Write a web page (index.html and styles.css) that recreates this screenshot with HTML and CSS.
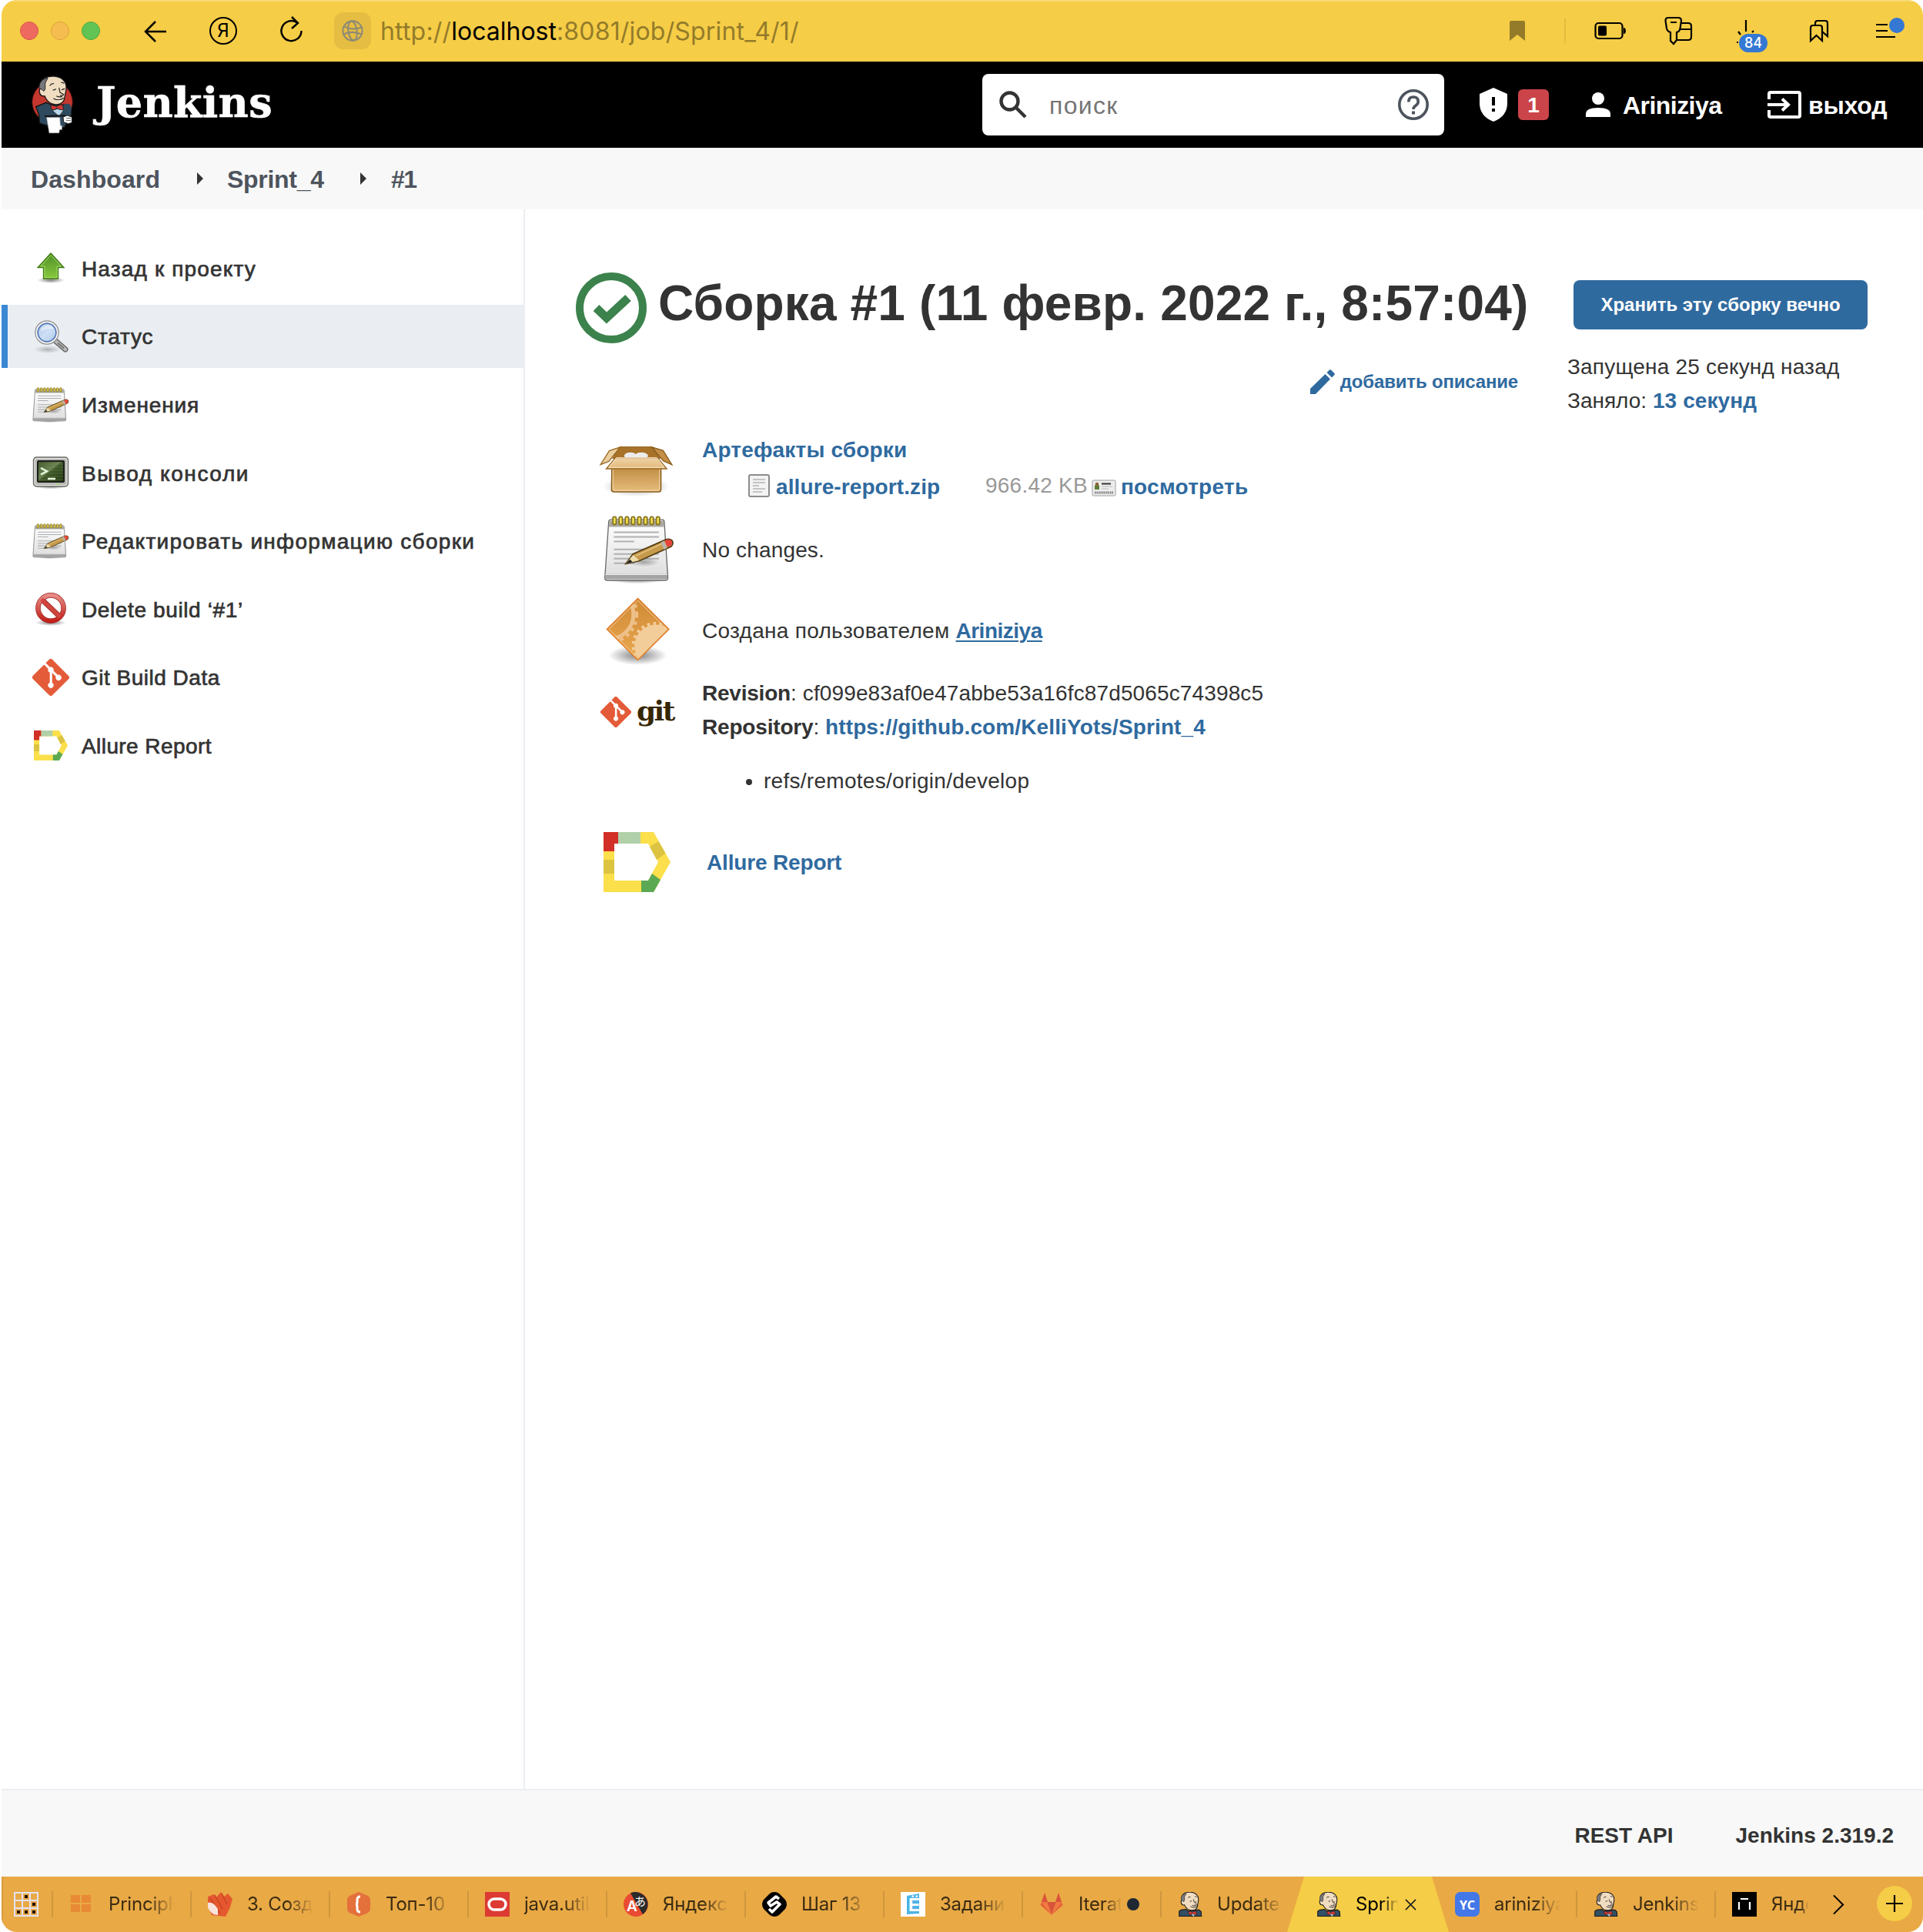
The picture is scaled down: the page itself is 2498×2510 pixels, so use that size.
FILE: index.html
```html
<!DOCTYPE html>
<html lang="ru">
<head>
<meta charset="utf-8">
<title>Sprint_4 #1 [Jenkins]</title>
<link rel="stylesheet" href="styles.css">
</head>
<body>
<svg class="defs" width="0" height="0" aria-hidden="true">
  <defs>
    <linearGradient id="gGreen" x1="0" y1="0" x2="0" y2="1"><stop offset="0" stop-color="#4f8f28"/><stop offset="1" stop-color="#87c93d"/></linearGradient>
    <linearGradient id="gLens" x1="0" y1="0" x2="1" y2="1"><stop offset="0" stop-color="#9dbbe3"/><stop offset=".5" stop-color="#cfe0f5"/><stop offset="1" stop-color="#a9c3e8"/></linearGradient>
    <linearGradient id="gPaper" x1="0" y1="0" x2="0" y2="1"><stop offset="0" stop-color="#fff"/><stop offset="1" stop-color="#dcdcdc"/></linearGradient>
    <linearGradient id="gBox" x1="0" y1="0" x2="0" y2="1"><stop offset="0" stop-color="#c08d43"/><stop offset="1" stop-color="#e6bd7c"/></linearGradient>
    <linearGradient id="gFlap" x1="0" y1="0" x2="0" y2="1"><stop offset="0" stop-color="#eed3a8"/><stop offset="1" stop-color="#e2b878"/></linearGradient>
    <linearGradient id="gScreen" x1="0" y1="0" x2="1" y2="1"><stop offset="0" stop-color="#3c5226"/><stop offset=".45" stop-color="#6c8454"/><stop offset=".5" stop-color="#3f5929"/><stop offset="1" stop-color="#243814"/></linearGradient>
    <linearGradient id="gNo" x1="0" y1="0" x2="0" y2="1"><stop offset="0" stop-color="#e88b85"/><stop offset="1" stop-color="#c2201a"/></linearGradient>
    <linearGradient id="gDia" x1="0" y1="0" x2="0" y2="1"><stop offset="0" stop-color="#cf8a35"/><stop offset="1" stop-color="#eba850"/></linearGradient>
    <radialGradient id="gShade"><stop offset="0" stop-color="#000" stop-opacity=".5"/><stop offset="1" stop-color="#000" stop-opacity="0"/></radialGradient>
    <clipPath id="diaClip"><path d="M175 624L292 740 175 856 59 740z"/></clipPath>

    <symbol id="butler-head" viewBox="44 38 148 148">
      <path d="M52 184l0-30 12-8 30-4 14 10 50-6 14 0 12 10 2 28z" fill="#334f63" stroke="#1a1a1a" stroke-width="5"/>
      <path d="M68 66c4-18 26-28 52-27 30 2 48 20 48 42 0 16-4 26-6 40-2 20-18 28-36 27-20-2-34-14-42-32-12 2-18-4-20-14-2-8 2-16 6-17z" fill="#f0dcc0" stroke="#1a1a1a" stroke-width="5"/>
      <path d="M66 88c-4-16 0-32 22-40l8-2-12 20 0 22-6 10c-4-6-8-10-12-10z" fill="#7c7c80" stroke="#222" stroke-width="3"/>
      <path d="M104 74q6-10 16-6M146 66q8-4 12 4M116 94q8 2 12-4M146 100l10-4M138 82l4 16 16 14q-4 8-14 4M120 126q22 12 38 0l2-8M130 118q10 6 20 2" fill="none" stroke="#222" stroke-width="4"/>
      <path d="M118 168l20 18 20-18-20-6z" fill="#b8d4e6" stroke="#222" stroke-width="3"/>
      <path d="M106 154q16 0 24 6 10-8 24-6l4 20q-14 2-26-6-10 8-20 6z" fill="#d33833" stroke="#222" stroke-width="3"/>
    </symbol>

    <symbol id="butler" viewBox="30 34 168 232">
      <ellipse cx="114" cy="140" rx="79" ry="80" fill="#c5372e" stroke="#3a0d0b" stroke-width="3"/>
      <path d="M50 158L90 142 114 152 168 150 190 186 160 240 96 232 64 222 62 190z" fill="#2f4a5e" stroke="#151515" stroke-width="4"/>
      <path d="M158 150Q182 140 188 158 190 178 182 194L156 198z" fill="#2f4a5e"/>
      <path d="M68 66c4-18 26-28 52-27 30 2 48 20 48 42 0 16-4 26-6 40-2 20-18 30-36 29-20-2-34-14-42-34-12 2-18-4-20-14-2-8 2-16 6-17z" fill="#f0dcc0" stroke="#1a1a1a" stroke-width="4"/>
      <path d="M64 88c-4-16 4-34 24-40l8-2-10 20 0 24-6 8c-4-6-10-10-16-10z" fill="#77777b" stroke="#222" stroke-width="3"/>
      <path d="M104 76q6-10 16-8M148 64q8-2 12 4M116 92q8 2 12-4M150 92l12-4M140 84l4 18 14 8q-4 8-14 4M118 126q22 12 40-2M130 116q10 6 22 2" fill="none" stroke="#222" stroke-width="3.500"/>
      <path d="M118 128q16 8 32 4l-8 6z" fill="#fff"/>
      <path d="M114 172L140 196 160 168 140 164z" fill="#b8d4e6" stroke="#222" stroke-width="2"/>
      <path d="M106 152q16 0 24 6 10-10 24-8l4 20q-14 2-26-6-10 8-20 6z" fill="#d33833" stroke="#222" stroke-width="3"/>
      <path d="M84 195L166 193" stroke="#151515" stroke-width="6"/>
      <path d="M92 200H143L145 232H151V247H142L140 260H102z" fill="#fff" stroke="#bbb" stroke-width="2"/>
      <path d="M156 198L172 192 190 198V220L176 224 158 218z" fill="#fff" stroke="#222" stroke-width="3"/>
      <path d="M168 203h18M168 212h18" stroke="#444" stroke-width="2.500"/>
    </symbol>

    <symbol id="notepad" viewBox="44 296 274 268">
      <ellipse cx="172" cy="546" rx="110" ry="16" fill="url(#gShade)"/>
      <path d="M72 314H272Q278 314 279 322L293 538Q293 549 284 549H58Q49 549 49 540L64 322Q65 314 72 314z" fill="url(#gPaper)" stroke="#6a6a6a" stroke-width="4"/>
      <path d="M66 318h210l2 24H64z" fill="#aaa79f"/>
      <path d="M52 524h238l2 20H50z" fill="#a3a5a4"/><path d="M52 526h238" stroke="#e8e8e8" stroke-width="4"/>
      <g stroke="#b0b0b0" stroke-width="6"><path d="M84 363h174M84 381h174M84 399h78M84 429h174M84 447h174M84 465h174M84 483h80"/></g>
      <g fill="#efe053" stroke="#86701a" stroke-width="5"><rect x="80" y="303" width="13" height="30" rx="6"/><rect x="104" y="303" width="13" height="30" rx="6"/><rect x="128" y="303" width="13" height="30" rx="6"/><rect x="152" y="303" width="13" height="30" rx="6"/><rect x="176" y="303" width="13" height="30" rx="6"/><rect x="200" y="303" width="13" height="30" rx="6"/><rect x="224" y="303" width="13" height="30" rx="6"/><rect x="248" y="303" width="13" height="30" rx="6"/></g>
      <ellipse cx="200" cy="478" rx="60" ry="18" fill="url(#gShade)" opacity=".6"/>
      <path d="M130 485L158 447 286 391Q302 386 310 396 316 408 306 418L182 474z" fill="#c69a4c" stroke="#513b12" stroke-width="5"/>
      <path d="M130 485L158 451 168 458 181 472z" fill="#eddcae"/><path d="M130 486l16-18 10 10z" fill="#222"/>
      <path d="M170 454L272 406" stroke="#e4c07a" stroke-width="5"/>
      <path d="M266 402l12-6 12 28-12 6z" fill="#b9b4ae"/>
      <path d="M280 395l10-3q14-3 18 6 4 12-6 18l-10 5z" fill="#e8423c"/>
    </symbol>

    <symbol id="arrow-up" viewBox="0 0 48 48">
      <ellipse cx="24" cy="40" rx="18" ry="4" fill="url(#gShade)"/>
      <path d="M24 5L41 23.500H33.500V38H14.500V23.500H7z" fill="url(#gGreen)" stroke="#3f7a13" stroke-width="1.300"/>
      <path d="M24 7.500L37.500 22H32V36.500H16V22H10.500z" fill="none" stroke="#a5dc6b" stroke-width="1"/>
    </symbol>
    <symbol id="magnifier" viewBox="0 0 48 48">
      <ellipse cx="20" cy="41" rx="18" ry="5" fill="url(#gShade)" opacity=".5"/>
      <path d="M29 29l14 12" stroke="#5f5f5f" stroke-width="7" stroke-linecap="round"/>
      <path d="M29 29l14 12" stroke="#b9b9b9" stroke-width="4.500" stroke-linecap="round"/>
      <path d="M33 32.500l8 7" stroke="#777" stroke-width="2"/>
      <circle cx="19" cy="19" r="14" fill="url(#gLens)" stroke="#8c8c8c" stroke-width="3.500"/>
      <circle cx="19" cy="19" r="13.600" fill="none" stroke="#f4f4f4" stroke-width="2"/>
      <circle cx="19" cy="19" r="11.700" fill="none" stroke="#4a74b8" stroke-width="1.400"/>
      <path d="M10 18q1-8 9-9 7 0 8 5-8 0-17 4z" fill="#fff" opacity=".45"/>
    </symbol>
    <symbol id="terminal" viewBox="0 0 48 48">
      <ellipse cx="24" cy="42" rx="20" ry="3.500" fill="url(#gShade)"/>
      <rect x="1.500" y="4" width="45" height="38" rx="4" fill="#b9bab6" stroke="#6d6e6a" stroke-width="1.400"/>
      <rect x="3" y="5.500" width="42" height="35" rx="3" fill="none" stroke="#e9e9e7" stroke-width="1"/>
      <rect x="7" y="9" width="34" height="27" rx="1" fill="url(#gScreen)" stroke="#1d1e1a" stroke-width="2"/>
      <path d="M8 13h32M8 17h32M8 21h32M8 25h32M8 29h32M8 33h32" stroke="#7f9a60" stroke-width=".7" opacity=".5"/>
      <path d="M11 18l8 4.200-8 4.300M20 32h10" fill="none" stroke="#e6f9df" stroke-width="2.400"/>
      <circle cx="33" cy="38.800" r="1.100" fill="#8ce03c"/>
    </symbol>
    <symbol id="no-entry" viewBox="0 0 48 48">
      <ellipse cx="24" cy="42" rx="20" ry="4" fill="url(#gShade)"/>
      <circle cx="24" cy="23" r="16.600" fill="#fff" stroke="#9a2a26" stroke-width="6.600"/>
      <path d="M12 11.500L36 34.500" stroke="#9a2a26" stroke-width="6.600"/>
      <circle cx="24" cy="23" r="16.600" fill="none" stroke="url(#gNo)" stroke-width="5.200"/>
      <path d="M12 11.500L36 34.500" stroke="#d2453f" stroke-width="5"/>
    </symbol>
    <symbol id="git-mark" viewBox="0 0 92 92">
      <path fill="#e35b38" d="M90.156 41.965 50.036 1.848a5.918 5.918 0 0 0-8.372 0l-8.328 8.332 10.566 10.566a7.030 7.030 0 0 1 7.230 1.684 7.034 7.034 0 0 1 1.669 7.277l10.187 10.184a7.028 7.028 0 0 1 7.278 1.672 7.040 7.040 0 0 1 0 9.957 7.050 7.050 0 0 1-9.965 0 7.044 7.044 0 0 1-1.528-7.660l-9.500-9.497V59.360a7.040 7.040 0 0 1 1.860 11.290 7.040 7.040 0 0 1-9.957 0 7.040 7.040 0 0 1 0-9.958 7.060 7.060 0 0 1 2.304-1.539V33.926a7.049 7.049 0 0 1-3.820-9.234L29.242 14.272 1.730 41.777a5.918 5.918 0 0 0 0 8.371L41.852 90.270a5.925 5.925 0 0 0 8.370 0l39.934-39.934a5.925 5.925 0 0 0 0-8.371"/>
    </symbol>
    <symbol id="allure" viewBox="0 0 87 78" preserveAspectRatio="none">
      <path d="M0 0H65L87 39 65 78H0zM14 15V63H58L71 39 58 15z" fill="#fbdf4b" fill-rule="evenodd"/>
      <path d="M0 0H19V15H14V25H0z" fill="#d22f27"/>
      <path d="M19 0H48V15H19z" fill="#b0d0a9"/>
      <path d="M0 36H14V54H0z" fill="#dcc341"/>
      <path d="M60 19L71.500 12 80.500 27.500 69 36z" fill="#dcc341"/>
      <path d="M49 63H58L63 54 74 62 65 78H49z" fill="#5ca953"/>
    </symbol>
    <symbol id="box" viewBox="26 24 290 204">
      <ellipse cx="170" cy="186" rx="130" ry="40" fill="url(#gShade)" opacity=".7"/>
      <path d="M76 112H267V196Q267 207 258 207H84Q75 207 75 198z" fill="url(#gBox)" stroke="#8b5e1e" stroke-width="5"/>
      <path d="M80 116V196Q80 202 88 202H254Q262 202 262 196V116" fill="none" stroke="#f3dcb2" stroke-width="3"/>
      <path d="M108 32H232L262 76H80z" fill="#a87228" stroke="#9a6a26" stroke-width="4"/>
      <ellipse cx="148" cy="66" rx="24" ry="13" fill="#ececec"/><ellipse cx="191" cy="66" rx="26" ry="13" fill="#ececec"/>
      <path d="M108 33L66 47 32 101 64 88z" fill="#eccf9e" stroke="#9a6a26" stroke-width="4"/>
      <path d="M232 33L276 46 310 101 276 86z" fill="#c48f45" stroke="#8b5e1e" stroke-width="4"/>
      <path d="M90 74H254L290 117H54z" fill="url(#gFlap)" stroke="#9a6a26" stroke-width="4"/>
      <path d="M94 74H251L280 112H64z" fill="none" stroke="#f8e7c8" stroke-width="3"/>
    </symbol>
    <symbol id="gears" viewBox="44 612 262 268">
      <ellipse cx="175" cy="842" rx="115" ry="38" fill="url(#gShade)"/>
      <path d="M175 619L297 740 175 861 54 740z" fill="url(#gDia)" stroke="#e07b2a" stroke-width="4"/>
      <g clip-path="url(#diaClip)" fill="none" stroke="#f2cd9a">
        <circle cx="62" cy="682" r="96" stroke-width="15" stroke="#eec089"/>
        <circle cx="62" cy="682" r="109" stroke-width="12" stroke-dasharray="13 15" stroke="#eec089"/>
        <circle cx="246" cy="806" r="84" fill="#f2cd9a" stroke="none"/>
        <circle cx="246" cy="806" r="89" stroke-width="12" stroke-dasharray="11 13"/>
      </g>
      <path d="M175 627L289 740 175 853 62 740z" fill="none" stroke="#f5cf9c" stroke-width="3"/>
    </symbol>
  </defs>
</svg>

<div class="window">
  <header class="toolbar">
    <div class="lights"><i class="light red"></i><i class="light amber"></i><i class="light green"></i></div>
    <svg class="nav back" viewBox="0 0 28 28"><path d="M28 14H1M14 1L1 14l13 13"/></svg>
    <div class="ya">Я</div>
    <svg class="nav reload" viewBox="0 0 30 36"><path d="M22 8.500A13 13 0 1 0 27.500 19"/><path d="M15 1l8 8-8 7"/></svg>
    <div class="site">
      <svg viewBox="0 0 30 30"><circle cx="15" cy="15" r="13.500"/><ellipse cx="15" cy="15" rx="6" ry="13.500" transform="rotate(-8 15 15)"/><path d="M3 9q12 6 25 1M2 20q12-6 26 0"/></svg>
    </div>
    <div class="url">http://<b>localhost</b>:8081/job/Sprint_4/1/</div>
    <svg class="mark" viewBox="0 0 20 26"><path d="M2 0H18Q20 0 20 2V26L10 18 0 26V2Q0 0 2 0z"/></svg>
    <i class="rule"></i>
    <svg class="tool battery" viewBox="0 0 42 24"><rect x="1.500" y="2" width="35" height="20" rx="4"/><rect x="5" y="5.500" width="11" height="13" rx="2" class="solid"/><path class="solid" d="M38 8h1q2 1 2 4t-2 4h-1z"/></svg>
    <svg class="tool key" viewBox="0 0 38 38"><path d="M5 2H18Q22 2 22 6L20.500 16Q20 20 16 21V31L12 36 8 32V21Q4 20 3 16L1.500 6Q1.500 2 5 2zM8 8h8"/><path d="M22 9H31Q35 9 35 13V27Q35 31 31 31H17M20 17H35"/></svg>
    <div class="power">
      <svg class="tool" viewBox="0 0 32 32"><path d="M13 1V16M3 16l3 4M21 17l2-2M1 30h2"/></svg>
      <span class="count">84</span>
    </div>
    <svg class="tool marks" viewBox="0 0 26 30"><path d="M2 28V11Q2 8 5 8H14Q17 8 17 11V28L9.500 21z"/><path d="M8 8V5Q8 2 11 2H21Q24 2 24 5V22L17 16"/></svg>
    <div class="menu"><i></i><i></i><i></i><span class="dot"></span></div>
  </header>

  <header class="jenkins">
    <svg class="butler"><use href="#butler"/></svg>
    <div class="brand">Jenkins</div>
    <div class="search">
      <svg class="glass" viewBox="0 0 36 36"><circle cx="13.500" cy="13.500" r="11"/><path d="M22 22L34 34"/></svg>
      <span>поиск</span>
      <svg class="help" viewBox="0 0 40 40"><circle cx="20" cy="20" r="18.200"/><path d="M13.800 16.500Q13.800 10 20 10T26.200 16Q26.200 19 23 21.200 20 23.200 20 26"/><path class="solid" d="M18 28.500h4v4h-4z"/></svg>
    </div>
    <svg class="shield" viewBox="0 0 36 44"><path fill="#fff" d="M18 0L36 8V20Q36 37 18 44 0 37 0 20V8z"/><path d="M16 12h4v11h-4zM16 27h4v4h-4z"/></svg>
    <span class="alert">1</span>
    <svg class="person" viewBox="0 0 32 32"><circle cx="16" cy="8" r="8"/><path d="M0 32V28Q0 20 16 20T32 28V32z"/></svg>
    <b class="user">Ariniziya</b>
    <svg class="exit" viewBox="0 0 44 36"><path d="M2 11V4Q2 2 4 2H40Q42 2 42 4V32Q42 34 40 34H4Q2 34 2 32V25M0 18H26M19 10.500L27 18 19 25.500"/></svg>
    <b class="logout">выход</b>
  </header>

  <nav class="crumbs">
    <span class="c1">Dashboard</span><i></i><span class="c2">Sprint_4</span><i></i><span class="c3">#1</span>
  </nav>

  <div class="page">
    <aside class="side">
      <a class="s1"><svg><use href="#arrow-up"/></svg><span>Назад к проекту</span></a>
      <a class="s2 active"><svg><use href="#magnifier"/></svg><span>Статус</span></a>
      <a class="s3"><svg><use href="#notepad"/></svg><span>Изменения</span></a>
      <a class="s4"><svg><use href="#terminal"/></svg><span>Вывод консоли</span></a>
      <a class="s5"><svg><use href="#notepad"/></svg><span>Редактировать информацию сборки</span></a>
      <a class="s6"><svg><use href="#no-entry"/></svg><span>Delete build ‘#1’</span></a>
      <a class="s7"><svg><use href="#git-mark"/></svg><span>Git Build Data</span></a>
      <a class="s8"><svg class="allure-small"><use href="#allure"/></svg><span>Allure Report</span></a>
    </aside>

    <main class="main">
      <section class="build">
        <div class="title">
          <svg viewBox="0 0 92 92"><circle cx="46" cy="46" r="41" fill="none" stroke="#3c824c" stroke-width="10"/><path d="M26.500 46L40 59 68 33" fill="none" stroke="#3c824c" stroke-width="11"/></svg>
          <h1>Сборка #1 (11 февр. 2022 г., 8:57:04)</h1>
        </div>
        <a class="describe">
          <svg viewBox="0 0 32 32"><path d="M0 32V25L19.500 6 26 12.500 7 32zM21.500 4L25 .500Q26 0 27 .500L31.500 5Q32 6 31.500 7L28 10.500z"/></svg>добавить описание
        </a>
        <div class="row r1">
          <svg class="i-box"><use href="#box"/></svg>
          <div>
            <a class="art">Артефакты сборки</a>
            <div class="file">
              <svg class="doc" viewBox="0 0 28 30"><rect x="1" y="1" width="26" height="28" rx="2" fill="#f3f3f3" stroke="#8c8c8c" stroke-width="2"/><path d="M6 7h16M6 11h16M6 15h8M6 19h16M6 23h12" stroke="#c4c4c4" stroke-width="2"/></svg>
              <a class="zip">allure-report.zip</a>
              <span class="size">966.42 KB</span>
              <svg class="card" viewBox="0 0 32 22"><rect x="1" y="1" width="30" height="20" rx="2" fill="#ededed" stroke="#bcbcbc" stroke-width="1.500"/><path d="M4 13V8q3-5 6 0v5z" fill="#5f7d35"/><circle cx="7" cy="6" r="2.300" fill="#8e6438"/><path d="M13 5.500h12" stroke="#333" stroke-width="2"/><path d="M13 9h14M13 12h9" stroke="#ccc" stroke-width="1.500"/><path d="M4 17h24" stroke="#777" stroke-width="3" stroke-dasharray="1.500 1"/></svg>
              <a class="view">посмотреть</a>
            </div>
          </div>
        </div>
        <div class="row r2"><svg class="i-note"><use href="#notepad"/></svg><span class="t2">No changes.</span></div>
        <div class="row r3"><svg class="i-gears"><use href="#gears"/></svg><span class="t3">Создана пользователем</span><a class="u3">Ariniziya</a></div>
        <div class="row r4">
          <div class="gitlogo"><svg><use href="#git-mark"/></svg><span>git</span></div>
          <div>
            <p class="rev"><b>Revision</b>: cf099e83af0e47abbe53a16fc87d5065c74398c5</p>
            <p class="repo"><b>Repository</b>: <a>https://github.com/KelliYots/Sprint_4</a></p>
            <ul><li>refs/remotes/origin/develop</li></ul>
          </div>
        </div>
        <div class="row r5"><svg class="i-allure"><use href="#allure"/></svg><a class="t5">Allure Report</a></div>
      </section>

      <section class="meta">
        <button>Хранить эту сборку вечно</button>
        <p class="m1">Запущена 25 секунд назад</p>
        <p class="m2">Заняло: <a>13 секунд</a></p>
      </section>
    </main>
  </div>

  <footer class="foot"><span>REST API</span><span>Jenkins 2.319.2</span></footer>

  <div class="tabs">
    <svg class="apps" viewBox="0 0 32 32"><path fill="#e4e2f4" d="M0 0h32v32H0z"/><path fill="#e9a945" d="M2 2h8v8H2zM12 2h8v8h-8zM22 2h8v8h-8zM2 12h8v8H2zM12 12h8v8h-8zM22 12h8v8h-8zM2 22h8v8H2zM12 22h8v8h-8zM22 22h8v8h-8z"/><path fill="#210f08" d="M14 4h4v4h-4zM24 14h4v4h-4zM4 24h4v4H4zM14 24h4v4h-4zM24 24h4v4h-4z"/></svg>
    <div class="tab"><svg viewBox="0 0 32 32"><path fill="#e88a35" d="M2 4h12v10H2zM16 4h12v10H16zM2 16h12v10H2zM16 16h12v10H16z"/></svg><span>Principle</span></div>
    <div class="tab"><svg viewBox="0 0 32 32"><path fill="#e5582f" d="M0 6L8 3 11 7 17 0 21 6 26 2 32 9 29 20 23 32 5 30 0 18z"/><path d="M9 4l10 18M18 2l7 14M3 8l13 20" stroke="#c9431f" stroke-width="1.500"/><path fill="#f8e3dc" d="M0 14q7-2 13 8l0 8q-9 0-13-10z"/></svg><span>3. Созда</span></div>
    <div class="tab"><svg viewBox="0 0 32 32"><path fill="#e4703b" d="M16 0L28 5Q31 7 31 10V22Q31 25 28 27L16 32 4 27Q1 25 1 22V10Q1 7 4 5z"/><path d="M18 6q-4 0-4 4v3q0 3-2 3 2 0 2 3v3q0 4 4 4" fill="none" stroke="#fff" stroke-width="3"/></svg><span>Топ-10</span></div>
    <div class="tab"><svg viewBox="0 0 32 32"><path fill="#dc3a33" d="M0 0h32v32H0z"/><rect x="5" y="9" width="22" height="14" rx="7" fill="none" stroke="#fff" stroke-width="3.500"/></svg><span>java.util</span></div>
    <div class="tab"><svg viewBox="0 0 32 32"><circle cx="16" cy="16" r="16" fill="#e94b33"/><path d="M9 1.500A16 16 0 0 1 25 29z" fill="#2a2a2a"/><text x="4" y="25" class="ico-a">A</text><text x="14" y="18" class="ico-jp">あ</text></svg><span>Яндекс</span></div>
    <div class="tab"><svg viewBox="0 0 32 32"><path d="M16 0Q20 0 22 2L30 10Q32 13 32 16T30 22L22 30Q19 32 16 32T10 30L2 22Q0 19 0 16T2 10L10 2Q12 0 16 0z"/><path d="M22 9L18 6 8 14 11 18 19 13 23 16 13 26 9 22" fill="none" stroke="#fff" stroke-width="3.600" stroke-linejoin="round"/></svg><span>Шаг 13</span></div>
    <div class="tab"><svg viewBox="0 0 32 32"><path fill="#fff" d="M0 0h32v32H0z"/><path fill="#4db4e6" d="M8 5L24 2V28L8 29z"/><text x="10" y="25" class="ico-e">Ё</text></svg><span>Задани</span></div>
    <div class="tab short"><svg viewBox="0 0 32 32"><path fill="#d9533a" d="M3 13L7 1 11 13zM21 13L25 1 29 13zM10 13h12L16 30z"/><path fill="#f07a42" d="M3 13h7l6 17zM29 13h-7l-6 17z"/><path fill="#e86239" d="M3 13l-1.500 4L16 30zM29 13l1.500 4L16 30z"/></svg><span>Iterato</span><i class="bullet"></i></div>
    <div class="tab"><svg><use href="#butler-head"/></svg><span>Update</span></div>
    <div class="tab active"><svg><use href="#butler-head"/></svg><span>Sprint</span><svg class="close" viewBox="0 0 16 16"><path d="M1 1l14 14M15 1L1 15"/></svg></div>
    <div class="tab"><svg viewBox="0 0 32 32"><rect width="32" height="32" rx="7" fill="#4478e8"/><text x="16" y="22.500" class="ico-yc">YC</text></svg><span>ariniziya</span></div>
    <div class="tab"><svg><use href="#butler-head"/></svg><span>Jenkins</span></div>
    <div class="tab last"><svg viewBox="0 0 32 32"><path d="M0 0h32v32H0z"/><path d="M9 23V13M23 23V13M11 9H21" stroke="#fff" stroke-width="2.200"/></svg><span>Яндекс</span></div>
    <svg class="more" viewBox="0 0 15 28"><path d="M1 1l13 13L1 27"/></svg>
    <div class="plus"><svg viewBox="0 0 22 22"><path d="M11 0v22M0 11h22"/></svg></div>
  </div>
</div>
</body>
</html>
```
FILE: styles.css
```css
* { box-sizing: border-box; margin: 0; padding: 0; }
body { background: #fff; font: 28px/44px "Liberation Sans", Arial, sans-serif; color: #333; }
svg { display: block; flex: none; overflow: visible; }
.defs { position: absolute; }
a { color: #2f6a9f; font-weight: bold; text-decoration: none; }
i { display: block; flex: none; }
span, b { white-space: nowrap; }

.window { margin-left: 2px; width: 2496px; height: 2510px; display: flex; flex-direction: column; border-radius: 20px; overflow: hidden; }

/* Browser toolbar */
.toolbar { height: 80px; flex: none; display: flex; align-items: center; background: #f6cd46; box-shadow: inset 0 2px #f9d978; padding: 0 31px 0 24px; }
.lights { display: flex; gap: 16px; width: 162px; }
.light { width: 24px; height: 24px; border-radius: 50%; border: 1px solid; }
.red { background: #ee6a60; border-color: #d9564c; }
.amber { background: #f5bd4f; border-color: #dfa33a; }
.green { background: #61c454; border-color: #50ab43; }
.nav { fill: none; stroke: #000; stroke-width: 2.5; }
.back { width: 28px; height: 28px; margin-top: 2px; }
.ya { width: 36px; height: 36px; margin-left: 56px; border: 2px solid #000; border-radius: 50%; font: 24px/32px Inter, sans-serif; text-align: center; color: #000; }
.reload { width: 30px; height: 36px; margin: -3px 0 0 56px; }
.site { width: 48px; height: 48px; margin-left: 40px; border-radius: 12px; background: #e4bd42; display: flex; align-items: center; justify-content: center; }
.site svg { width: 28px; height: 28px; fill: none; stroke: #8f8a75; stroke-width: 2.2; }
.url { flex: 1; margin: 1px 0 0 12px; font: 32px/40px Inter, sans-serif; letter-spacing: .18px; color: #937b2a; }
.url b { font-weight: 400; color: #000; letter-spacing: 0; }
.mark { width: 20px; height: 26px; fill: #937b2a; }
.rule { width: 2px; height: 32px; margin-left: 51px; background: #e3bb3f; }
.tool { fill: none; stroke: #000; stroke-width: 2.2; }
.tool .solid { fill: #000; stroke: none; }
.battery { width: 42px; height: 24px; margin-left: 37px; }
.key { width: 38px; height: 38px; margin-left: 49px; }
.power { position: relative; width: 42px; height: 44px; margin-left: 55px; }
.power svg { width: 32px; height: 32px; margin-top: 7px; }
.count { position: absolute; left: 4px; top: 26px; width: 37px; height: 24px; border-radius: 12px; background: #3478d4; color: #fff; font: 500 18px/24px Inter, sans-serif; text-align: center; }
.marks { width: 26px; height: 30px; margin-left: 53px; }
.menu { position: relative; width: 30px; margin-left: 61px; display: flex; flex-direction: column; gap: 6px; }
.menu i { height: 2px; width: 15px; background: #000; }
.menu i:nth-child(3) { width: 25px; }
.dot { position: absolute; left: 17px; top: -8px; width: 20px; height: 20px; border-radius: 50%; background: #3478d4; }

/* Jenkins header */
.jenkins { height: 112px; flex: none; display: flex; align-items: center; background: #000; color: #fff; font-size: 32px; padding-left: 38px; }
.butler { width: 56px; height: 78px; }
.brand { width: 1151px; margin-left: 29px; margin-top: -6px; font: bold 54px/80px "DejaVu Serif", serif; letter-spacing: .3px; -webkit-text-stroke: .6px #fff; }
.search { width: 600px; height: 80px; flex: none; display: flex; align-items: center; background: #fff; border-radius: 8px; padding: 0 20px 0 22px; color: #757575; letter-spacing: 1.3px; }
.search span { flex: 1; margin: 2px 0 0 29px; }
.glass { width: 36px; height: 36px; fill: none; stroke: #333; stroke-width: 4.4; }
.help { width: 40px; height: 40px; fill: none; stroke: #4d545d; stroke-width: 3.6; }
.help .solid { fill: #4d545d; stroke: none; }
.shield { width: 36px; height: 44px; margin-left: 46px; }
.alert { width: 40px; height: 40px; margin-left: 14px; border-radius: 6px; background: #cb444a; font: bold 28px/41px "Liberation Sans", sans-serif; text-align: center; }
.person { width: 32px; height: 32px; margin-left: 48px; fill: #fff; }
.user { width: 188px; margin: 2px 0 0 16px; letter-spacing: -.55px; }
.exit { width: 44px; height: 36px; fill: none; stroke: #fff; stroke-width: 4; }
.logout { margin: 2px 0 0 9px; letter-spacing: -.25px; }

/* Breadcrumbs */
.crumbs { height: 80px; flex: none; display: flex; align-items: center; background: #f8f8f8; padding-left: 38px; color: #4d545d; font: bold 32px/40px "Liberation Sans", sans-serif; }
.crumbs span { margin-top: 2px; }
.crumbs i { border-left: 8px solid #333; border-top: 8px solid transparent; border-bottom: 8px solid transparent; margin-right: 31px; }
.c1 { width: 216px; letter-spacing: .1px; }
.c2 { width: 173px; letter-spacing: -.3px; }
.c3 { margin-left: 1px; letter-spacing: -1.5px; }

/* Page body */
.page { height: 2052px; flex: none; display: flex; }
.side { width: 680px; flex: none; border-right: 2px solid #eaeef2; padding-top: 35.4px; display: flex; flex-direction: column; gap: 6.6px; }
.side a { height: 82px; display: flex; align-items: center; padding-left: 40px; color: #333; font-weight: 400; line-height: 40px; -webkit-text-stroke: .7px #333; }
.side span { padding-top: 3px; }
.side svg { width: 48px; height: 48px; margin-right: 16px; }
.side .active { background: #eaeef2; box-shadow: inset 8px 0 #3a87d3; margin-right: -2px; }
.side .allure-small { width: 44px; height: 39px; margin: 0 18px 0 2px; }
.s1 { letter-spacing: 1.15px; }
.s2 { letter-spacing: .8px; }
.s3 { letter-spacing: .9px; }
.s4 { letter-spacing: 1.6px; }
.s5 { letter-spacing: 1.3px; }
.s6 { letter-spacing: .62px; }
.s7 { letter-spacing: .5px; }
.s8 { letter-spacing: .42px; }

.main { display: flex; padding: 82px 0 0 66px; }
.build { width: 1236px; margin-right: 52px; }
.title { height: 92px; display: flex; }
.title svg { width: 92px; height: 92px; margin-right: 15px; }
h1 { font: bold 64px/80px "Liberation Sans", sans-serif; letter-spacing: .16px; white-space: nowrap; }
.describe { height: 40px; margin: 30px 12px 45px 0; display: flex; justify-content: flex-end; align-items: center; font-size: 24px; line-height: 40px; letter-spacing: -.18px; }
.describe svg { width: 32px; height: 32px; margin-right: 7px; fill: #2f6a9f; }
.row { display: flex; align-items: center; padding-left: 30px; }
.r1 { height: 99px; align-items: flex-start; }
.i-box { width: 97px; height: 68px; margin: 17px 37px 0 0; }
.art { display: block; margin-top: 1px; line-height: 46px; letter-spacing: .17px; }
.file { height: 50px; display: flex; align-items: center; padding-left: 60px; line-height: 50px; }
.doc { width: 28px; height: 30px; margin: -4px 8px 0 0; }
.zip { width: 272px; letter-spacing: .1px; }
.size { color: #999; letter-spacing: .24px; margin-top: -4px; }
.card { width: 32px; height: 22px; margin: 1px 6px 0 5px; }
.view { letter-spacing: .25px; }
.r2 { height: 108px; }
.i-note { width: 92px; height: 90px; margin: 0 36px 0 6px; }
.t2 { padding-top: 2px; letter-spacing: .16px; }
.r3 { height: 102px; }
.i-gears { width: 87px; height: 89px; margin: 0 40px 0 7px; }
.t3 { padding-top: 2px; letter-spacing: .29px; margin-right: 8px; }
.u3 { padding-top: 2px; letter-spacing: -.5px; text-decoration: underline; text-decoration-thickness: 2px; text-underline-offset: 3px; }
.r4 { height: 190px; align-items: flex-start; padding-top: 9px; }
.gitlogo { width: 134px; display: flex; align-items: center; padding: 26px 0 0 2px; }
.gitlogo svg { width: 40px; height: 40px; margin-right: 7px; }
.gitlogo span { width: 50px; margin-top: -5px; font: bold 36px/40px "DejaVu Serif", serif; letter-spacing: -2.6px; color: #362701; }
.rev { letter-spacing: .13px; }
.rev b { letter-spacing: -.22px; }
.repo b { letter-spacing: -.18px; }
.repo a { letter-spacing: .12px; }
.row ul { margin-top: 26px; padding-left: 80px; letter-spacing: .28px; }
.r5 { height: 120px; }
.i-allure { width: 87px; height: 78px; margin: 0 47px 0 6px; }
.t5 { padding-top: 2px; letter-spacing: -.16px; }

.meta { width: 424px; }
.meta button { display: block; width: 382px; height: 64px; margin: 10px 0 27px 8px; border: 0; border-radius: 8px; background: #2f6a9f; color: #fff; font: bold 24px/62px "Liberation Sans", sans-serif; }
.m1 { letter-spacing: .19px; white-space: nowrap; }
.m2 a { letter-spacing: .1px; }

.foot { height: 114px; flex: none; border-top: 2px solid #eaeef2; background: #f8f8f8; display: flex; justify-content: flex-end; align-items: center; gap: 81px; padding: 6px 38px 0 0; font-weight: bold; }

/* Bottom tab strip */
.tabs { height: 72px; flex: none; display: flex; align-items: center; background: #e9a945; padding-left: 16px; font: 24px/36px Inter, sans-serif; color: #3b2c12; box-shadow: inset 2px 0 #d79c40; }
.apps { width: 32px; height: 32px; margin-right: 17px; }
.tab { width: 180px; height: 72px; flex: none; display: flex; align-items: center; padding-left: 23px; background: linear-gradient(#cf963d, #cf963d) 0 50%/2px 34px no-repeat; }
.tab svg { width: 32px; height: 32px; margin-right: 19px; }
.tab span { width: 86px; overflow: hidden; letter-spacing: -.2px; -webkit-mask: linear-gradient(90deg, #000 60%, transparent); mask: linear-gradient(90deg, #000 60%, transparent); }
.tab.short span { width: 56px; }
.bullet { width: 16px; height: 16px; margin-left: 7px; border-radius: 50%; background: #1f2833; }
.tab.active { width: 210px; margin: 0 -15px; padding-left: 38px; background: #f6cd46; color: #000; clip-path: polygon(22px 0, 188px 0, 210px 100%, 0 100%); }
.tab.active span { width: 56px; }
.tab.active + .tab { background: none; }
.tab .close { width: 15px; height: 15px; margin: 0 0 0 8px; fill: none; stroke: #222; stroke-width: 1.8; }
.tab.last { width: 154px; }
.tab.last span { width: 48px; -webkit-mask: linear-gradient(90deg, #000 80%, transparent); mask: linear-gradient(90deg, #000 80%, transparent); }
.more { width: 14px; height: 27px; fill: none; stroke: #000; stroke-width: 2.2; }
.plus { width: 46px; height: 46px; margin: -2px 0 0 43px; border-radius: 50%; background: #f6cd46; display: flex; align-items: center; justify-content: center; }
.plus svg { width: 22px; height: 22px; stroke: #000; stroke-width: 2.2; }
.ico-a { font: 600 19px Inter, sans-serif; fill: #fff; }
.ico-jp { font: 15px "Noto Sans CJK JP", sans-serif; fill: #fff; }
.ico-e { font: bold 23px "Liberation Sans", sans-serif; fill: #fff; }
.ico-yc { font: bold 16px "Noto Sans", sans-serif; fill: #fff; text-anchor: middle; }
```
